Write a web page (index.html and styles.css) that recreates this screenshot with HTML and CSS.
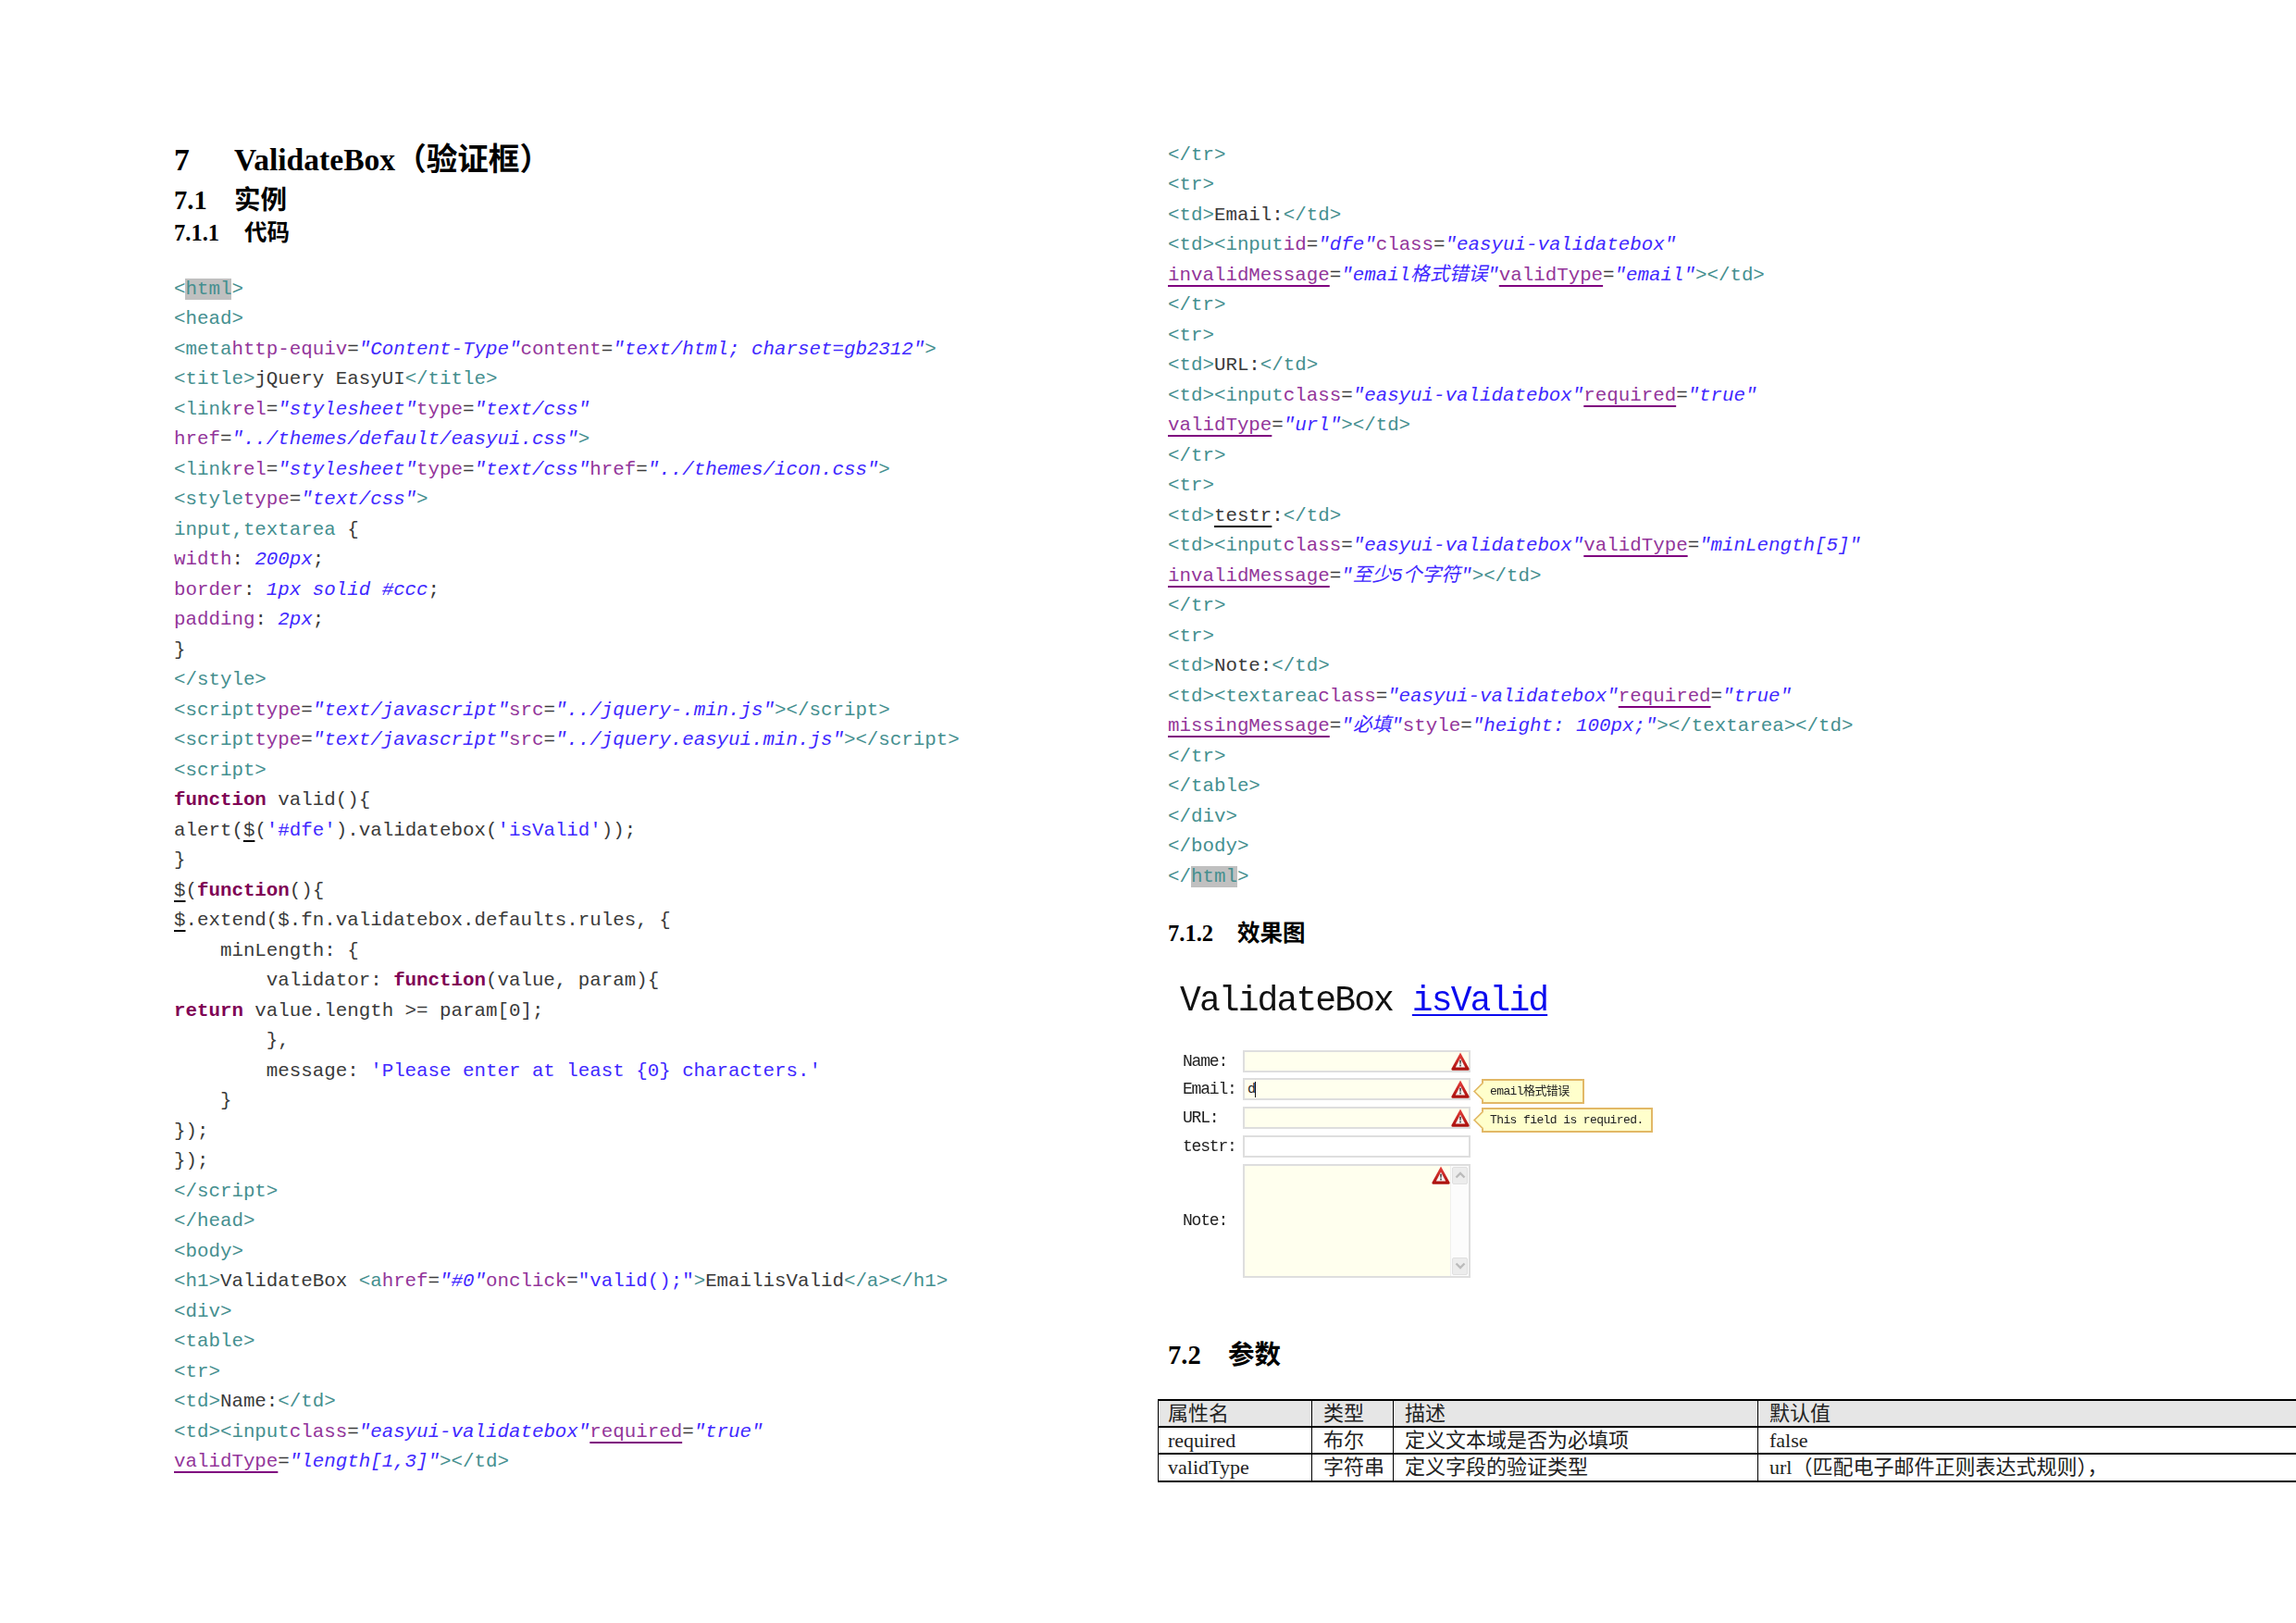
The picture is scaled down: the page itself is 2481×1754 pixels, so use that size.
FILE: index.html
```html
<!DOCTYPE html>
<html lang="zh-CN">
<head>
<meta charset="utf-8">
<title>ValidateBox（验证框）</title>
<link rel="stylesheet" href="styles.css">
</head>
<body>
<svg class="defs" width="0" height="0" aria-hidden="true">
  <defs>
    <linearGradient id="redg" x1="0" y1="0" x2="0" y2="1">
      <stop offset="0" stop-color="#e8413c"/>
      <stop offset="1" stop-color="#a80f0c"/>
    </linearGradient>
    <symbol id="warn" viewBox="0 0 20 20">
      <path d="M10 .5 L19.6 18 Q20 19.8 18.4 19.8 L1.6 19.8 Q0 19.8 .4 18 Z" fill="url(#redg)"/>
      <path d="M10 6.5 L15.2 16.4 L4.8 16.4 Z" fill="#f6f2f0"/>
      <path d="M9 8.8 H11 L10.7 12.8 H9.3 Z" fill="#555"/>
      <rect x="9.1" y="13.6" width="1.8" height="1.8" fill="#555"/>
    </symbol>
  </defs>
</svg>
<main class="page">
  <section class="col col-left">
    <h1 class="h1"><span class="num-1">7</span>ValidateBox（验证框）</h1>
    <h2 class="h2"><span class="num-2">7.1</span>实例</h2>
    <h3 class="h3"><span class="num-3">7.1.1</span>代码</h3>
    <div class="code code-left">
      <div class="ln"><span class="t">&lt;<span class="hl">html</span>&gt;</span></div>
      <div class="ln"><span class="t">&lt;head&gt;</span></div>
      <div class="ln"><span class="t">&lt;meta</span><span class="a">http-equiv</span>=<span class="v">"Content-Type"</span><span class="a">content</span>=<span class="v">"text/html; charset=gb2312"</span><span class="t">&gt;</span></div>
      <div class="ln"><span class="t">&lt;title&gt;</span>jQuery EasyUI<span class="t">&lt;/title&gt;</span></div>
      <div class="ln"><span class="t">&lt;link</span><span class="a">rel</span>=<span class="v">"stylesheet"</span><span class="a">type</span>=<span class="v">"text/css"</span></div>
      <div class="ln"><span class="a">href</span>=<span class="v">"../themes/default/easyui.css"</span><span class="t">&gt;</span></div>
      <div class="ln"><span class="t">&lt;link</span><span class="a">rel</span>=<span class="v">"stylesheet"</span><span class="a">type</span>=<span class="v">"text/css"</span><span class="a">href</span>=<span class="v">"../themes/icon.css"</span><span class="t">&gt;</span></div>
      <div class="ln"><span class="t">&lt;style</span><span class="a">type</span>=<span class="v">"text/css"</span><span class="t">&gt;</span></div>
      <div class="ln"><span class="t">input,textarea</span> {</div>
      <div class="ln"><span class="a">width</span>: <span class="v">200px</span>;</div>
      <div class="ln"><span class="a">border</span>: <span class="v">1px solid #ccc</span>;</div>
      <div class="ln"><span class="a">padding</span>: <span class="v">2px</span>;</div>
      <div class="ln">}</div>
      <div class="ln"><span class="t">&lt;/style&gt;</span></div>
      <div class="ln"><span class="t">&lt;script</span><span class="a">type</span>=<span class="v">"text/javascript"</span><span class="a">src</span>=<span class="v">"../jquery-.min.js"</span><span class="t">&gt;&lt;/script&gt;</span></div>
      <div class="ln"><span class="t">&lt;script</span><span class="a">type</span>=<span class="v">"text/javascript"</span><span class="a">src</span>=<span class="v">"../jquery.easyui.min.js"</span><span class="t">&gt;&lt;/script&gt;</span></div>
      <div class="ln"><span class="t">&lt;script&gt;</span></div>
      <div class="ln"><span class="k">function</span> valid(){</div>
      <div class="ln">alert(<span class="ud">$</span>(<span class="s">'#dfe'</span>).validatebox(<span class="s">'isValid'</span>));</div>
      <div class="ln">}</div>
      <div class="ln"><span class="ud">$</span>(<span class="k">function</span>(){</div>
      <div class="ln"><span class="ud">$</span>.extend($.fn.validatebox.defaults.rules, {</div>
      <div class="ln">    minLength: {</div>
      <div class="ln">        validator: <span class="k">function</span>(value, param){</div>
      <div class="ln"><span class="k">return</span> value.length &gt;= param[0];</div>
      <div class="ln">        },</div>
      <div class="ln">        message: <span class="s">'Please enter at least {0} characters.'</span></div>
      <div class="ln">    }</div>
      <div class="ln">});</div>
      <div class="ln">});</div>
      <div class="ln"><span class="t">&lt;/script&gt;</span></div>
      <div class="ln"><span class="t">&lt;/head&gt;</span></div>
      <div class="ln"><span class="t">&lt;body&gt;</span></div>
      <div class="ln"><span class="t">&lt;h1&gt;</span>ValidateBox <span class="t">&lt;a</span><span class="a">href</span>=<span class="v">"#0"</span><span class="a">onclick</span>=<span class="s">"valid();"</span><span class="t">&gt;</span>EmailisValid<span class="t">&lt;/a&gt;&lt;/h1&gt;</span></div>
      <div class="ln"><span class="t">&lt;div&gt;</span></div>
      <div class="ln"><span class="t">&lt;table&gt;</span></div>
      <div class="ln"><span class="t">&lt;tr&gt;</span></div>
      <div class="ln"><span class="t">&lt;td&gt;</span>Name:<span class="t">&lt;/td&gt;</span></div>
      <div class="ln"><span class="t">&lt;td&gt;&lt;input</span><span class="a">class</span>=<span class="v">"easyui-validatebox"</span><span class="a ua">required</span>=<span class="v">"true"</span></div>
      <div class="ln"><span class="a ua">validType</span>=<span class="v">"length[1,3]"</span><span class="t">&gt;&lt;/td&gt;</span></div>
    </div>
  </section>

  <section class="col col-right">
    <div class="code code-right">
      <div class="ln"><span class="t">&lt;/tr&gt;</span></div>
      <div class="ln"><span class="t">&lt;tr&gt;</span></div>
      <div class="ln"><span class="t">&lt;td&gt;</span>Email:<span class="t">&lt;/td&gt;</span></div>
      <div class="ln"><span class="t">&lt;td&gt;&lt;input</span><span class="a">id</span>=<span class="v">"dfe"</span><span class="a">class</span>=<span class="v">"easyui-validatebox"</span></div>
      <div class="ln"><span class="a ua">invalidMessage</span>=<span class="v">"email格式错误"</span><span class="a ua">validType</span>=<span class="v">"email"</span><span class="t">&gt;&lt;/td&gt;</span></div>
      <div class="ln"><span class="t">&lt;/tr&gt;</span></div>
      <div class="ln"><span class="t">&lt;tr&gt;</span></div>
      <div class="ln"><span class="t">&lt;td&gt;</span>URL:<span class="t">&lt;/td&gt;</span></div>
      <div class="ln"><span class="t">&lt;td&gt;&lt;input</span><span class="a">class</span>=<span class="v">"easyui-validatebox"</span><span class="a ua">required</span>=<span class="v">"true"</span></div>
      <div class="ln"><span class="a ua">validType</span>=<span class="v">"url"</span><span class="t">&gt;&lt;/td&gt;</span></div>
      <div class="ln"><span class="t">&lt;/tr&gt;</span></div>
      <div class="ln"><span class="t">&lt;tr&gt;</span></div>
      <div class="ln"><span class="t">&lt;td&gt;</span><span class="ud">testr</span>:<span class="t">&lt;/td&gt;</span></div>
      <div class="ln"><span class="t">&lt;td&gt;&lt;input</span><span class="a">class</span>=<span class="v">"easyui-validatebox"</span><span class="a ua">validType</span>=<span class="v">"minLength[5]"</span></div>
      <div class="ln"><span class="a ua">invalidMessage</span>=<span class="v">"至少5个字符"</span><span class="t">&gt;&lt;/td&gt;</span></div>
      <div class="ln"><span class="t">&lt;/tr&gt;</span></div>
      <div class="ln"><span class="t">&lt;tr&gt;</span></div>
      <div class="ln"><span class="t">&lt;td&gt;</span>Note:<span class="t">&lt;/td&gt;</span></div>
      <div class="ln"><span class="t">&lt;td&gt;&lt;textarea</span><span class="a">class</span>=<span class="v">"easyui-validatebox"</span><span class="a ua">required</span>=<span class="v">"true"</span></div>
      <div class="ln"><span class="a ua">missingMessage</span>=<span class="v">"必填"</span><span class="a">style</span>=<span class="v">"height: 100px;"</span><span class="t">&gt;&lt;/textarea&gt;&lt;/td&gt;</span></div>
      <div class="ln"><span class="t">&lt;/tr&gt;</span></div>
      <div class="ln"><span class="t">&lt;/table&gt;</span></div>
      <div class="ln"><span class="t">&lt;/div&gt;</span></div>
      <div class="ln"><span class="t">&lt;/body&gt;</span></div>
      <div class="ln"><span class="t">&lt;/<span class="hl">html</span>&gt;</span></div>
    </div>

    <h3 class="h3 h3-fig"><span class="num-4">7.1.2</span>效果图</h3>

    <figure class="shot">
      <div class="shot-title">ValidateBox <a class="shot-link" href="#0">isValid</a></div>
      <div class="form">
        <div class="lbl">Name:</div>
        <div class="field invalid"><svg class="warn"><use href="#warn"/></svg></div>
        <div class="lbl">Email:</div>
        <div class="field invalid"><span class="typed">d</span><span class="caret"></span><svg class="warn"><use href="#warn"/></svg></div>
        <div class="lbl">URL:</div>
        <div class="field invalid"><svg class="warn"><use href="#warn"/></svg></div>
        <div class="lbl">testr:</div>
        <div class="field"></div>
        <div class="lbl">Note:</div>
        <div class="field area invalid">
          <svg class="warn"><use href="#warn"/></svg>
          <div class="scroll">
            <div class="sbtn"><svg class="chev" viewBox="0 0 12 8"><path d="M1.5 6.5 L6 2 L10.5 6.5" fill="none" stroke="#bbb" stroke-width="2.4"/></svg></div>
            <div class="sbtn"><svg class="chev" viewBox="0 0 12 8"><path d="M1.5 1.5 L6 6 L10.5 1.5" fill="none" stroke="#bbb" stroke-width="2.4"/></svg></div>
          </div>
        </div>
      </div>
      <div class="tip tip-a"><span class="tip-arrow"></span><span class="tip-text">email格式错误</span></div>
      <div class="tip tip-b"><span class="tip-arrow"></span><span class="tip-text">This field is required.</span></div>
    </figure>

    <h2 class="h2 h2-params"><span class="num-5">7.2</span>参数</h2>

    <table class="params">
      <colgroup>
        <col class="c1"><col class="c2"><col class="c3"><col class="c4">
      </colgroup>
      <thead>
        <tr><th>属性名</th><th>类型</th><th>描述</th><th>默认值</th></tr>
      </thead>
      <tbody>
        <tr><td>required</td><td>布尔</td><td>定义文本域是否为必填项</td><td>false</td></tr>
        <tr><td>validType</td><td>字符串</td><td>定义字段的验证类型</td><td>url（匹配电子邮件正则表达式规则），</td></tr>
      </tbody>
    </table>
  </section>
</main>
</body>
</html>
```

FILE: styles.css
```css
* { box-sizing: border-box; }

html, body {
  margin: 0;
  padding: 0;
  width: 2481px;
  height: 1754px;
  overflow: hidden;
  background: #fff;
}

.defs { position: absolute; }

.page {
  display: flex;
  width: 2481px;
  height: 1754px;
  font-family: "Liberation Serif", "Noto Sans CJK SC", serif;
  color: #000;
}

.col { padding-top: 151.5px; }
.col-left { width: 1251px; padding-left: 188px; }
.col-right { width: 1230px; }

.h1, .h2, .h3 { margin: 0; font-weight: 700; white-space: nowrap; }
.h1 { font-size: 33.6px; height: 42px; line-height: 42px; }
.h2 { font-size: 28.5px; height: 46px; line-height: 46px; }
.h3 { font-size: 24.5px; height: 24px; line-height: 24px; }

.num-1, .num-2 { display: inline-block; width: 65px; }
.num-3 { display: inline-block; width: 76px; }
.num-4 { display: inline-block; width: 75px; }
.num-5 { display: inline-block; width: 65px; }

.h3-fig { margin: 33px 0 0 11px; }
.h2-params { margin: 61.5px 0 0 11px; }

.code {
  font-family: "Liberation Mono", "Noto Sans CJK SC", monospace;
  font-size: 20.8px;
  color: #3a3a3a;
}
.code-left { margin-top: 33px; }
.code-right { margin-left: 11px; }

.ln { height: 32.5px; line-height: 32.5px; white-space: pre; }

.t { color: #458f8f; }
.a { color: #93359a; }
.v { color: #4028ff; font-style: italic; }
.s { color: #4028ff; }
.k { color: #7f0055; font-weight: 700; }
.hl { background: #c0c0c0; }

.ua, .ud {
  text-decoration: underline;
  text-decoration-thickness: 2px;
  text-underline-offset: 5px;
  text-decoration-skip-ink: none;
}
.ua { text-decoration-color: #7f007f; }
.ud { text-decoration-color: #000; }

/* embedded screenshot */
.shot {
  position: relative;
  margin: 39px 0 0 24px;
  width: 560px;
  filter: blur(.45px);
}

.shot-title {
  font-family: "Liberation Mono", monospace;
  font-size: 38px;
  letter-spacing: -1.9px;
  height: 44px;
  line-height: 44px;
  white-space: pre;
  color: #111;
}
.shot-link {
  color: #0a0aee;
  text-decoration: underline;
  text-decoration-thickness: 2px;
  text-underline-offset: 4px;
}

.form {
  display: grid;
  grid-template-columns: 65px 246px;
  grid-template-rows: repeat(4, 24px) 123px;
  row-gap: 6.75px;
  margin: 30.5px 0 0 3px;
  font-family: "Liberation Mono", monospace;
  font-size: 18px;
  letter-spacing: -1.2px;
  color: #222;
}

.lbl { display: flex; align-items: center; }

.field {
  position: relative;
  display: flex;
  align-items: center;
  padding-left: 3px;
  border: 2px solid #dedede;
  background: #fff;
}
.invalid { background: #ffffee; }

.typed { font-size: 15px; line-height: 1; }
.caret { width: 1px; height: 17px; background: #111; }

.warn {
  position: absolute;
  right: -1px;
  top: 0;
  width: 20px;
  height: 20px;
}
.area .warn { right: 20px; top: 0; }

.scroll {
  position: absolute;
  top: 0;
  right: 0;
  bottom: 0;
  width: 20px;
  display: flex;
  flex-direction: column;
  justify-content: space-between;
  padding: 1px;
  background: #fcfcfc;
  border-left: 1px solid #efefef;
}
.sbtn {
  display: flex;
  align-items: center;
  justify-content: center;
  height: 19px;
  background: #ececec;
  border: 1px solid #e0e0e0;
  border-radius: 2px;
}
.chev { width: 12px; height: 8px; }

.tip {
  position: absolute;
  left: 326px;
  display: flex;
  align-items: center;
  height: 27px;
  padding: 0 7px;
  background: #ffffcc;
  border: 2px solid #e2b866;
  white-space: nowrap;
  color: #222;
  font-family: "Liberation Mono", "Noto Sans CJK SC", monospace;
  font-size: 13px;
  letter-spacing: -.6px;
}
.tip-a { top: 106px; width: 111px; }
.tip-b { top: 137px; width: 185px; }
.tip-text { position: relative; line-height: 1; }

.tip-arrow {
  position: absolute;
  left: -10px;
  top: 3px;
  width: 17px;
  height: 17px;
  transform: rotate(45deg) scale(.78);
  background: #ffffcc;
  border-left: 2px solid #e2b866;
  border-bottom: 2px solid #e2b866;
}

/* parameter table */
.params {
  margin-top: 24px;
  width: 1230px;
  table-layout: fixed;
  border-collapse: collapse;
  font-size: 22px;
  color: #222;
}
.c1 { width: 166px; }
.c2 { width: 88px; }
.c3 { width: 394px; }
.c4 { width: 582px; }

.params th, .params td {
  height: 29.2px;
  padding: 0 10px 0 12px;
  line-height: 26px;
  font-weight: 400;
  text-align: left;
  white-space: nowrap;
  border-top: 2px solid #000;
  border-bottom: 2px solid #000;
  border-left: 1px solid #000;
  border-right: 1px solid #000;
}
.params th:first-child, .params td:first-child { padding-left: 10px; }
.params th { background: #e6e6e6; }
```
